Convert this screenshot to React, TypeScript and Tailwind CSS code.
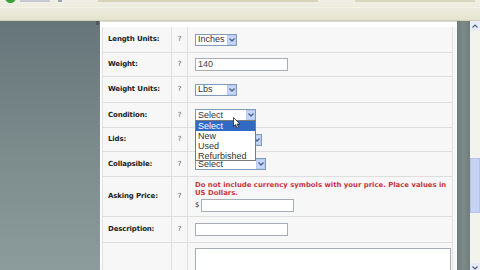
import React from "react";

const labelCls = "font-['DejaVu_Sans',sans-serif] font-bold text-[7px] text-[#222222] tracking-[-0.15px]";

function Sel({ text, w }: { text: string; w: number }) {
  return (
    <div
      className="relative flex h-[12px] items-center border border-[#7f9db9] bg-white font-['Liberation_Sans',sans-serif] text-[9px] leading-none text-[#333]"
      style={{ width: w }}
    >
      <span className="pl-[2px]">{text}</span>
      <div className="absolute right-0 top-0 flex h-[10px] w-[9px] items-center justify-center border border-[#b9c9f2] bg-[#c6d5fb]">
        <svg width="6" height="4" viewBox="0 0 6 4">
          <path d="M0.5 0.5 L3 3 L5.5 0.5" stroke="#4d6185" strokeWidth="1.3" fill="none" />
        </svg>
      </div>
    </div>
  );
}

function Input({ w, text }: { w: number; text?: string }) {
  return (
    <div
      className="flex h-[13px] items-center border border-[#a7adb3] bg-white pl-[2px] font-['Liberation_Sans',sans-serif] text-[9px] leading-none text-[#444]"
      style={{ width: w }}
    >
      {text}
    </div>
  );
}

function Row({
  h,
  label,
  children,
  q = true,
}: {
  h: number;
  label?: string;
  children?: React.ReactNode;
  q?: boolean;
}) {
  return (
    <div className="flex shrink-0 border-b border-[#dedede]" style={{ height: h }}>
      <div className={"flex w-[69px] items-center pl-[5px] border-r border-[#e0e0e0] " + labelCls}>{label}</div>
      <div className="flex w-[16px] items-center justify-center border-r border-[#e0e0e0] font-['DejaVu_Sans',sans-serif] text-[7px] text-[#555]">
        {q ? "?" : ""}
      </div>
      <div className="relative flex flex-1 items-center pl-[7px]">{children}</div>
    </div>
  );
}

export default function App() {
  return (
    <div className="relative flex h-[270px] w-[480px] flex-col overflow-hidden bg-[#ebead9]">
      {/* top toolbar */}
      <div className="relative h-[21px] w-full shrink-0 bg-gradient-to-b from-[#f1f0e6] to-[#e5e4cf] border-b border-[#cfcdb8]">
        <div className="absolute left-[5px] top-[-8px] h-[11px] w-[11px] rounded-full bg-[#3aa03a]" />
        <div className="absolute left-[20px] top-0 h-[2px] w-[30px] bg-[#c9c9d6]" />
        <div className="absolute left-[58px] top-0 h-[2px] w-[4px] bg-[#9aa6b8]" />
        <div className="absolute left-[98px] top-0 h-[2px] w-[220px] bg-[#d6d3b9]" />
        <div className="absolute left-[355px] top-0 h-[2px] w-[120px] bg-[#d9d6be]" />
        <div className="absolute left-0 top-[7px] h-[1px] w-full bg-[#f4f3e8]" />
      </div>
      <div className="flex h-[249px] shrink-0 overflow-hidden">
        {/* left dark panel */}
        <div className="relative w-[100px] bg-gradient-to-b from-[#667579] via-[#7b8b8c] to-[#8c9c9c]">
          <div className="absolute right-[1px] top-0 h-[4px] w-[3px] bg-[#4f5a5c]" />
        </div>
        {/* content */}
        <div className="relative w-[357px] overflow-hidden border-l border-[#ffffff] bg-[#f7f7f7]">
          <div className="h-[6px] border-t border-[#d9d9d9] bg-white" />
          <div className="ml-[1px] mr-[4px] border-l border-[#e2e2e2] border-r">
            <Row h={26} label="Length Units:">
              <Sel text="Inches" w={42} />
            </Row>
            <Row h={24} label="Weight:">
              <Input w={93} text="140" />
            </Row>
            <Row h={26} label="Weight Units:">
              <Sel text="Lbs" w={42} />
            </Row>
            <Row h={25} label="Condition:">
              <Sel text="Select" w={61} />
              <div className="absolute left-[7px] top-[17px] z-10 flex w-[61px] flex-col border border-[#7a7a7a] bg-white font-['Liberation_Sans',sans-serif] text-[9px] leading-[10px] text-[#333]">
                <div className="h-[10px] bg-[#316ac5] pl-[2px] text-white">Select</div>
                <div className="h-[10px] pl-[2px]">New</div>
                <div className="h-[10px] pl-[2px]">Used</div>
                <div className="h-[9px] pl-[2px]">Refurbished</div>
              </div>
              <svg className="absolute left-[45px] top-[14px] z-20" width="8" height="12" viewBox="0 0 8 12">
                <path d="M0.5 0.5 L0.5 9.5 L2.6 7.6 L4 11 L5.5 10.3 L4.1 7 L7 7 Z" fill="white" stroke="#222" strokeWidth="0.8" />
              </svg>
            </Row>
            <Row h={24} label="Lids:">
              <Sel text="Select" w={67} />
            </Row>
            <Row h={25} label="Collapsible:">
              <Sel text="Select" w={71} />
            </Row>
            <Row h={40} label="Asking Price:">
              <div className="flex flex-col">
                <div className="font-['DejaVu_Sans',sans-serif] font-bold text-[6.9px] leading-[8px] text-[#c8343e]">
                  Do not include currency symbols with your price. Place values in
                  <br />
                  US Dollars.
                </div>
                <div className="mt-[2px] flex items-center gap-[2px] font-['DejaVu_Sans',sans-serif] text-[7px] text-[#333]">
                  <span>$</span>
                  <Input w={93} />
                </div>
              </div>
            </Row>
            <Row h={26} label="Description:">
              <Input w={93} />
            </Row>
            <div className="flex h-[40px]">
              <div className="w-[69px] border-r border-[#e0e0e0]" />
              <div className="w-[16px] border-r border-[#e0e0e0]" />
              <div className="flex-1 pl-[7px] pt-[5px]">
                <div className="h-[40px] w-[256px] border border-[#a7adb3] bg-white" />
              </div>
            </div>
          </div>
        </div>
        {/* dark band */}
        <div className="w-[13px] bg-gradient-to-r from-[#6f7d7c] via-[#7c8a88] to-[#6f7d7c]" />
        {/* scrollbar */}
        <div className="relative flex w-[10px] flex-col bg-[#f3f3ee]">
          <div className="flex h-[10px] items-center justify-center bg-[#e8ecf6]">
            <svg width="6" height="4" viewBox="0 0 6 4">
              <path d="M0.5 3.5 L3 1 L5.5 3.5" stroke="#4d6185" strokeWidth="1.2" fill="none" />
            </svg>
          </div>
          <div className="absolute left-0 top-[137px] h-[55px] w-[10px] border border-[#b4c2ec] bg-[#c6d2f4]" />
          <div className="absolute bottom-0 left-0 flex h-[7px] w-[10px] items-end justify-center bg-[#e8ecf6]">
            <svg width="6" height="4" viewBox="0 0 6 4">
              <path d="M0.5 0.5 L3 3 L5.5 0.5" stroke="#4d6185" strokeWidth="1.2" fill="none" />
            </svg>
          </div>
        </div>
      </div>
    </div>
  );
}
